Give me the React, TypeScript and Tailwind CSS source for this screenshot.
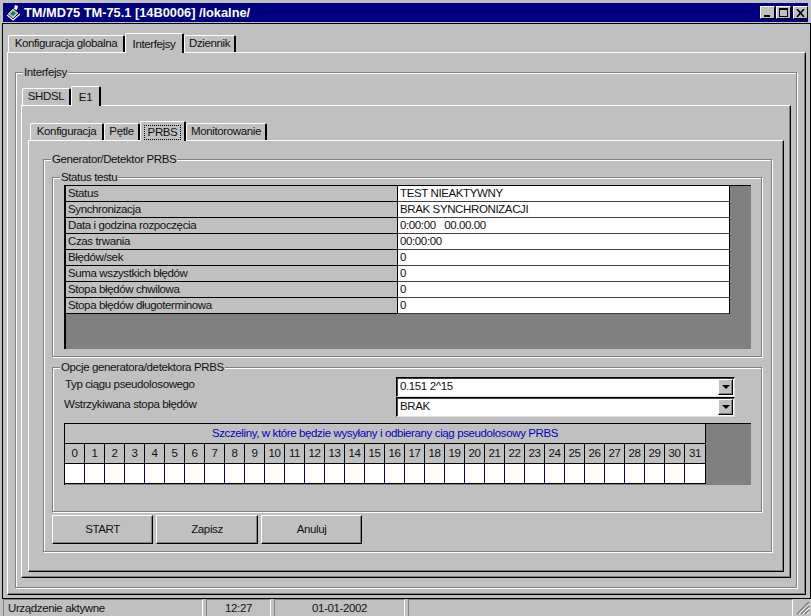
import type { ReactNode } from 'react';

const statusRows = [
  ['Status', 'TEST NIEAKTYWNY'],
  ['Synchronizacja', 'BRAK SYNCHRONIZACJI'],
  ['Data i godzina rozpoczęcia', '0:00:00   00.00.00'],
  ['Czas trwania', '00:00:00'],
  ['Błędów/sek', '0'],
  ['Suma wszystkich błędów', '0'],
  ['Stopa błędów chwilowa', '0'],
  ['Stopa błędów długoterminowa', '0'],
];

const slots = Array.from({ length: 32 }, (_, i) => i);

const Tab = ({ label, w, active, focus }: { label: string; w: string; active?: boolean; focus?: boolean }) => (
  <div
    className={`${w} ${active ? 'h-[20px] -mb-px pt-[2px] z-10 bg-[#c0c0c0]' : 'h-[17px]'} flex items-center justify-center border-l border-t border-white border-r-2 border-r-black rounded-t-[2px] whitespace-nowrap`}
  >
    <span className={focus ? 'outline-1 outline-dotted outline-black px-[3px] leading-[13px]' : ''}>{label}</span>
  </div>
);

const TabPanel = ({ className, children }: { className: string; children: ReactNode }) => (
  <div
    className={`${className} flex flex-col border-l border-t border-white border-r border-b border-r-black border-b-black shadow-[inset_-1px_-1px_0_#808080]`}
  >
    {children}
  </div>
);

const Group = ({ title, className, children }: { title: string; className: string; children: ReactNode }) => (
  <div className={`${className} relative border border-[#808080] shadow-[inset_1px_1px_0_#fff,1px_1px_0_#fff]`}>
    <span className="absolute -top-[8px] left-[7px] bg-[#c0c0c0] px-[1px] leading-[14px] whitespace-nowrap">{title}</span>
    {children}
  </div>
);

const Combo = ({ value }: { value: string }) => (
  <div className="w-[339px] h-[20px] flex items-center justify-between bg-white border-l border-t border-black border-r border-b border-r-[#dfdfdf] border-b-[#dfdfdf] pl-[3px] pr-[1px] shadow-[inset_1px_1px_0_#404040]">
    <span>{value}</span>
    <div className="w-[15px] h-[16px] flex items-center justify-center bg-[#c0c0c0] border-l border-t border-white border-r border-b border-r-black border-b-black shadow-[inset_-1px_-1px_0_#808080]">
      <div className="w-0 h-0 border-l-[4px] border-r-[4px] border-t-[4px] border-l-transparent border-r-transparent border-t-black" />
    </div>
  </div>
);

const Btn = ({ label, w }: { label: string; w: string }) => (
  <div className={`${w} h-[29px] flex items-center justify-center border-l border-t border-white border-r border-b border-r-black border-b-black shadow-[inset_-1px_-1px_0_#808080]`}>
    {label}
  </div>
);

const WinBtn = ({ children, className = '' }: { children: ReactNode; className?: string }) => (
  <div className={`${className} w-[15px] h-[13px] bg-[#c0c0c0] flex items-center justify-center border-l border-t border-white border-r border-b border-r-black border-b-black`}>
    {children}
  </div>
);

const StatusCell = ({ className, children }: { className: string; children?: ReactNode }) => (
  <div className={`${className} h-[17px] border-l border-t border-[#808080] border-r border-r-white shrink-0 overflow-hidden leading-[16px]`}>
    {children}
  </div>
);

export default function App() {
  return (
    <div className="w-[811px] h-[616px] overflow-hidden bg-[#c0c0c0] text-[#111] text-[11.5px] tracking-[-0.38px] font-['Liberation_Sans',Arial,sans-serif] flex flex-col pt-[3px]">
      {/* Title bar */}
      <div className="mx-[3px] h-[19px] shrink-0 bg-[#000080] flex items-center text-white font-bold pl-[2px]">
        <svg width="17" height="17" viewBox="0 0 17 17" className="shrink-0">
          <path d="M2 10 L8 4 L14 9 L8 15 Z" fill="#c0c0c0" stroke="#000" strokeWidth="1" />
          <path d="M5 10 L8 7 L11 9 L8 12 Z" fill="#008080" />
          <path d="M9 5 L10 1 L13 2 L12 6 Z" fill="#fff" />
          <path d="M2 11 L8 16 L15 10" stroke="#fff" strokeWidth="1.2" fill="none" />
        </svg>
        <span className="ml-[2px] text-[12.8px] tracking-normal whitespace-nowrap">TM/MD75 TM-75.1 [14B0006] /lokalne/</span>
        <div className="ml-auto flex items-center text-black">
          <WinBtn>
            <div className="w-[6px] h-[2px] bg-black mt-[7px] -ml-[1px]" />
          </WinBtn>
          <WinBtn className="ml-[1px]">
            <div className="w-[9px] h-[9px] border border-black border-t-2" />
          </WinBtn>
          <WinBtn className="ml-[2px]">
            <svg width="9" height="8" viewBox="0 0 9 8">
              <path d="M1 0 L8 8 M8 0 L1 8" stroke="#000" strokeWidth="1.6" />
            </svg>
          </WinBtn>
        </div>
      </div>

      {/* Client area */}
      <div className="ml-[2px] mt-px h-[576px] shrink-0 border-t border-l border-b border-r border-black pt-[9px] pl-[4px] pr-[4px] pb-[3px] flex flex-col">
        <div className="flex items-end pl-px h-[19px] shrink-0">
          <Tab label="Konfiguracja globalna" w="w-[117px]" />
          <Tab label="Interfejsy" w="w-[59px]" active />
          <Tab label="Dziennik" w="w-[52px]" />
        </div>
        <TabPanel className="flex-1 pl-[7px] pt-[19px] pr-[8px] pb-[6px]">
          <Group title="Interfejsy" className="flex-1 flex flex-col pl-[5px] pt-[12px] pr-[5px] pb-[9px]">
            <div className="flex items-end pl-[1px] h-[20px] shrink-0">
              <Tab label="SHDSL" w="w-[49px]" />
              <Tab label="E1" w="w-[30px]" active />
            </div>
            <TabPanel className="flex-1 pl-[6px] pt-[15px] pr-[6px] pb-[5px]">
              <div className="flex items-end pl-[2px] h-[19px] shrink-0">
                <Tab label="Konfiguracja" w="w-[74px]" />
                <Tab label="Pętle" w="w-[36px]" />
                <Tab label="PRBS" w="w-[46px]" active focus />
                <Tab label="Monitorowanie" w="w-[81px]" />
              </div>
              <TabPanel className="flex-1 pl-[14px] pt-[18px] pr-[11px] pb-[19px]">
                <Group title="Generator/Detektor PRBS" className="flex-1 flex flex-col pl-[8px] pt-[17px] pr-[9px] pb-[7px]">
                  {/* Status testu */}
                  <Group title="Status testu" className="h-[180px] shrink-0 pl-[11px] pt-[7px] pr-[10px]">
                    <div className="h-[164px] bg-[#808080] border-l-2 border-t border-black">
                      <div className="w-[664px] border-r border-black">
                        {statusRows.map(([name, value]) => (
                          <div key={name} className="flex h-[16px]">
                            <div className="w-[332px] bg-[#c0c0c0] border-r border-b border-black pl-[2px] leading-[15px] whitespace-nowrap">{name}</div>
                            <div className="flex-1 bg-white border-b border-[#404040] pl-[2px] leading-[15px] whitespace-pre">{value}</div>
                          </div>
                        ))}
                      </div>
                    </div>
                  </Group>

                  {/* Opcje generatora */}
                  <Group title="Opcje generatora/detektora PRBS" className="mt-[10px] flex-1 flex flex-col pl-[11px] pt-[9px] pr-[10px]">
                    <div className="flex justify-between pr-[16px]">
                      <div className="w-[330px] flex flex-col gap-[6px] leading-[14px] whitespace-nowrap">
                        <span className="pl-px">Typ ciągu pseudolosowego</span>
                        <span>Wstrzykiwana stopa błędów</span>
                      </div>
                      <div className="flex flex-col">
                        <Combo value="0.151 2^15" />
                        <Combo value="BRAK" />
                      </div>
                    </div>
                    <div className="mt-[6px] h-[62px] bg-[#808080] border-l border-t border-black">
                      <div className="w-[641px] border-r border-b border-black">
                        <div className="h-[20px] bg-[#c0c0c0] border-b border-black text-[#0000c0] flex items-center justify-center whitespace-nowrap">
                          Szczeliny, w które będzie wysyłany i odbierany ciąg pseudolosowy PRBS
                        </div>
                        <div className="flex h-[20px] bg-[#c0c0c0] border-b border-black">
                          {slots.map((n) => (
                            <div key={n} className="w-[20px] border-r border-black last:border-r-0 flex items-center justify-center">
                              {n}
                            </div>
                          ))}
                        </div>
                        <div className="flex h-[19px] bg-white">
                          {slots.map((n) => (
                            <div key={n} className="w-[20px] border-r border-[#000080] last:border-r-0" />
                          ))}
                        </div>
                      </div>
                    </div>
                  </Group>

                  <div className="flex gap-[3px] mt-[3px] h-[29px] shrink-0">
                    <Btn label="START" w="w-[101px]" />
                    <Btn label="Zapisz" w="w-[102px]" />
                    <Btn label="Anuluj" w="w-[101px]" />
                  </div>
                </Group>
              </TabPanel>
            </TabPanel>
          </Group>
        </TabPanel>
      </div>

      {/* Status bar */}
      <div className="flex gap-[3px] pl-[3px] h-[17px] overflow-hidden">
        <StatusCell className="w-[200px] pl-[4px]">Urządzenie aktywne</StatusCell>
        <StatusCell className="w-[65px] text-center">12:27</StatusCell>
        <StatusCell className="w-[131px] text-center">01-01-2002</StatusCell>
        <StatusCell className="w-[385px]" />
        <svg width="14" height="14" viewBox="0 0 14 14" className="shrink-0 mt-[2px]">
          <path d="M13 1 L1 13 M13 5 L5 13 M13 9 L9 13" stroke="#808080" strokeWidth="1.5" />
          <path d="M13 3 L3 13 M13 7 L7 13 M13 11 L11 13" stroke="#fff" strokeWidth="1" />
        </svg>
      </div>
    </div>
  );
}
